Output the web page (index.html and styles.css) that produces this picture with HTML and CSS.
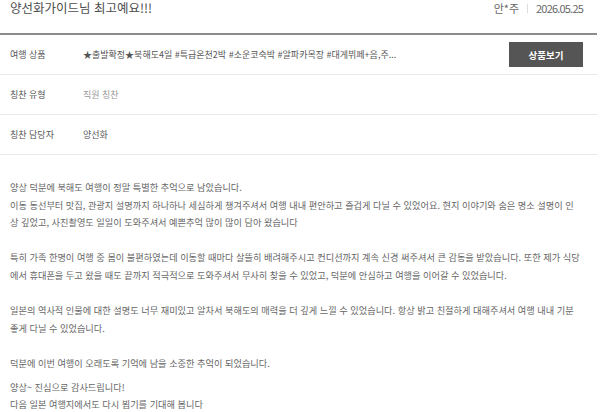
FILE: index.html
```html
<!DOCTYPE html>
<html lang="ko">
  <head>
    <meta charset="UTF-8" />
    <meta name="viewport" content="width=device-width, initial-scale=1.0" />
    <title>칭찬 게시판 - 상세</title>
    <link rel="stylesheet" href="styles.css">
  </head>
  <body>
    <div class="praise-view">
      <div class="view-head">
        <h2 class="view-title">양선화가이드님 최고예요!!!</h2>
        <div class="view-meta">
          <span class="writer">안*주</span>
          <span class="bar"></span>
          <span class="date">2026.05.25</span>
        </div>
      </div>

      <div class="info-row">
        <div class="info-label">여행 상품</div>
        <div class="info-value product">★출발확정★북해도4일 #특급온천2박 #소운코숙박 #알파카목장 #대게뷔페+음,주...</div>
        <button type="button" class="btn-product">상품보기</button>
      </div>
      <div class="info-row">
        <div class="info-label">칭찬 유형</div>
        <div class="info-value light">직원 칭찬</div>
      </div>
      <div class="info-row">
        <div class="info-label">칭찬 담당자</div>
        <div class="info-value">양선화</div>
      </div>

      <div class="view-content">
        <p>양상 덕분에 북해도 여행이 정말 특별한 추억으로 남았습니다.<br>
        이동 동선부터 맛집, 관광지 설명까지 하나하나 세심하게 챙겨주셔서 여행 내내 편안하고 즐겁게 다닐 수 있었어요. 현지 이야기와 숨은 명소 설명이 인<br>상 깊었고, 사진촬영도 일일이 도와주셔서 예쁜추억 많이 많이 담아 왔습니다</p>
        <p>특히 가족 한명이 여행 중 몸이 불편하였는데 이동할 때마다 살뜰히 배려해주시고 컨디션까지 계속 신경 써주셔서 큰 감동을 받았습니다. 또한 제가 식당<br>에서 휴대폰을 두고 왔을 때도 끝까지 적극적으로 도와주셔서 무사히 찾을 수 있었고, 덕분에 안심하고 여행을 이어갈 수 있었습니다.</p>
        <p>일본의 역사적 인물에 대한 설명도 너무 재미있고 알차서 북해도의 매력을 더 깊게 느낄 수 있었습니다. 항상 밝고 친절하게 대해주셔서 여행 내내 기분<br>좋게 다닐 수 있었습니다.</p>
        <p class="tight">덕분에 이번 여행이 오래도록 기억에 남을 소중한 추억이 되었습니다.</p>
        <p>양상~ 진심으로 감사드립니다!<br>
        다음 일본 여행지에서도 다시 뵙기를 기대해 봅니다</p>
      </div>
    </div>
  </body>
</html>
```

FILE: styles.css
```css
* {
  box-sizing: border-box;
}

body {
  margin: 0;
  background: #fff;
  font-family: "Noto Sans CJK KR", "Noto Sans", sans-serif;
  color: #555;
  overflow: hidden;
}

.praise-view {
  width: 597px;
}

.view-head {
  display: flex;
  justify-content: space-between;
  align-items: flex-start;
  height: 35px;
  padding: 0 14px 0 10px;
  border-bottom: 2px solid #8c8c8c;
}

.view-title {
  margin: 0;
  font-size: 12.5px;
  font-weight: normal;
  line-height: 16px;
  color: #4d4d4d;
}

.view-meta {
  display: flex;
  align-items: center;
  gap: 8px;
  font-size: 11px;
  line-height: 16px;
  color: #666;
}

.view-meta .date {
  letter-spacing: -0.8px;
}

.view-meta .bar {
  width: 1px;
  height: 9px;
  background: #ddd;
}

.info-row {
  display: flex;
  align-items: center;
  height: 40px;
  padding: 0 14px 0 10px;
  border-bottom: 1px solid #e8e8e8;
  font-size: 9px;
}

.info-label {
  width: 73px;
  flex-shrink: 0;
  color: #555;
}

.info-value {
  flex: 1;
  color: #555;
}

.info-value.light {
  color: #999;
}

.btn-product {
  width: 74px;
  height: 25px;
  border: none;
  background: #555;
  color: #fff;
  font-family: inherit;
  font-size: 9.5px;
  font-weight: bold;
  cursor: pointer;
}

.view-content {
  padding: 24px 8px 0 10px;
  font-size: 9.2px;
  line-height: 17.6px;
  color: #666;
}

.view-content p {
  margin: 0 0 17.6px;
}

.view-content p.tight {
  margin-bottom: 6px;
}
```
